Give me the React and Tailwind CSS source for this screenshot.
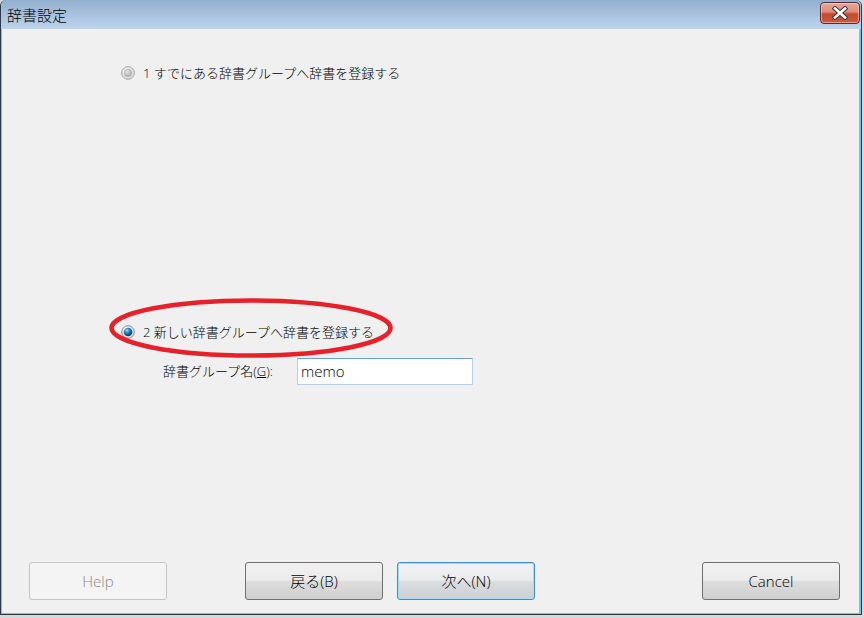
import React from "react";

function RadioDisabled() {
  return (
    <svg width="14" height="14" viewBox="0 0 14 14" className="shrink-0">
      <defs>
        <radialGradient id="rdOuter" cx="40%" cy="35%" r="70%">
          <stop offset="0%" stopColor="#ffffff" />
          <stop offset="100%" stopColor="#dcdcdc" />
        </radialGradient>
        <radialGradient id="rdInner" cx="40%" cy="35%" r="70%">
          <stop offset="0%" stopColor="#e6e6e6" />
          <stop offset="100%" stopColor="#a2a2a2" />
        </radialGradient>
      </defs>
      <circle cx="7" cy="7" r="6.3" fill="url(#rdOuter)" stroke="#a0a0a0" strokeWidth="1" />
      <circle cx="7" cy="7" r="3.9" fill="url(#rdInner)" stroke="#b4b4b4" strokeWidth="0.6" />
    </svg>
  );
}

function RadioChecked() {
  return (
    <svg width="14" height="14" viewBox="0 0 14 14" className="shrink-0">
      <defs>
        <radialGradient id="rcOuter" cx="40%" cy="35%" r="70%">
          <stop offset="0%" stopColor="#ffffff" />
          <stop offset="100%" stopColor="#d6d6d6" />
        </radialGradient>
        <radialGradient id="rcInner" cx="38%" cy="32%" r="75%">
          <stop offset="0%" stopColor="#a6e0ff" />
          <stop offset="35%" stopColor="#2a8fd0" />
          <stop offset="75%" stopColor="#0b4f80" />
          <stop offset="100%" stopColor="#0a2f4f" />
        </radialGradient>
      </defs>
      <circle cx="7" cy="7" r="6.3" fill="url(#rcOuter)" stroke="#888888" strokeWidth="1" />
      <circle cx="7" cy="7" r="4.3" fill="url(#rcInner)" />
    </svg>
  );
}

function CloseButton() {
  return (
    <div className="w-[40px] h-[22px] mt-[-3px] rounded-[4px] border border-[#5e2a2a] bg-[linear-gradient(to_bottom,#e9a899_0%,#dc8a76_45%,#c6482f_55%,#cc5a3c_100%)] shadow-[inset_0_0_0_1px_rgba(255,220,210,0.55)] flex items-center justify-center">
      <svg width="16" height="14" viewBox="0 0 16 14">
        <path d="M3 2.5 L13 11.5 M13 2.5 L3 11.5" stroke="#3c3c3c" strokeWidth="4.6" strokeLinecap="square" />
        <path d="M3 2.5 L13 11.5 M13 2.5 L3 11.5" stroke="#ffffff" strokeWidth="2.6" strokeLinecap="square" />
      </svg>
    </div>
  );
}

export default function App() {
  const btnBase =
    "w-[138px] h-[38px] rounded-[3px] flex items-center justify-center text-[15px]";
  const btnNormal =
    "border border-[#707070] bg-[linear-gradient(to_bottom,#f2f2f2_0%,#ebebeb_48%,#dddddd_52%,#cfcfcf_100%)] text-black";
  return (
    <div className="w-[864px] h-[618px] bg-[#d6d8da] overflow-hidden font-['Open_Sans','Noto_Sans_CJK_JP',sans-serif] font-light">
      <div className="w-[862px] h-[615px] flex flex-col border-x border-b border-[#2c3b4b] rounded-t-[6px] bg-[#72c3e6] overflow-hidden">
        <div className="h-[29px] shrink-0 flex items-center justify-between pl-[6px] pr-[1px] bg-[linear-gradient(to_bottom,#93afcf,#bdd4ec)]">
          <span className="text-[15px] leading-none text-black font-['Noto_Sans_CJK_JP',sans-serif]">辞書設定</span>
          <CloseButton />
        </div>
        <div className="flex-1 flex flex-col bg-[#f0f0f0] ml-[1px] mr-[2px] mb-[1px] text-black">
          <div className="pt-[35px] pl-[119px]">
            <div className="h-[18px] flex items-center gap-[8px] text-[13px] leading-none">
              <RadioDisabled />
              <span>1 すでにある辞書グループへ辞書を登録する</span>
            </div>
            <div className="relative mt-[241px] h-[18px] flex items-center gap-[8px] text-[13px] leading-none">
              <RadioChecked />
              <span>2 新しい辞書グループへ辞書を登録する</span>
              <svg
                className="absolute left-[-14px] top-[-27px] pointer-events-none"
                width="288"
                height="64"
                viewBox="0 0 288 64"
              >
                <ellipse cx="144" cy="32" rx="139.5" ry="27.5" fill="none" stroke="#e8202a" strokeWidth="4.6" />
              </svg>
            </div>
            <div className="mt-[17px] pl-[42px] flex items-center">
              <span className="w-[122px] text-[13px] leading-none">
                辞書グループ名(<span className="underline">G</span>):
              </span>
              <div className="ml-[12px] w-[176px] h-[27px] bg-white border border-[#b5cfe7] border-t-[#6f9dca] flex items-center pl-[3px] text-[15px]">
                memo
              </div>
            </div>
          </div>
          <div className="mt-auto flex items-center pl-[27px] pr-[19px] pb-[13px]">
            <div className={`${btnBase} border border-[#c6c6c6] bg-[#f4f4f4] text-[#8a8a8a]`}>Help</div>
            <div className={`${btnBase} ${btnNormal} ml-[78px]`}>戻る(B)</div>
            <div className={`${btnBase} ml-[14px] border border-[#3c8fcf] shadow-[inset_0_0_0_1px_#9fe0f8] bg-[linear-gradient(to_bottom,#f0f2f4_0%,#e9ebed_48%,#dadcde_52%,#cdd0d2_100%)] text-black`}>次へ(N)</div>
            <div className={`${btnBase} ${btnNormal} ml-auto`}>Cancel</div>
          </div>
        </div>
      </div>
    </div>
  );
}
